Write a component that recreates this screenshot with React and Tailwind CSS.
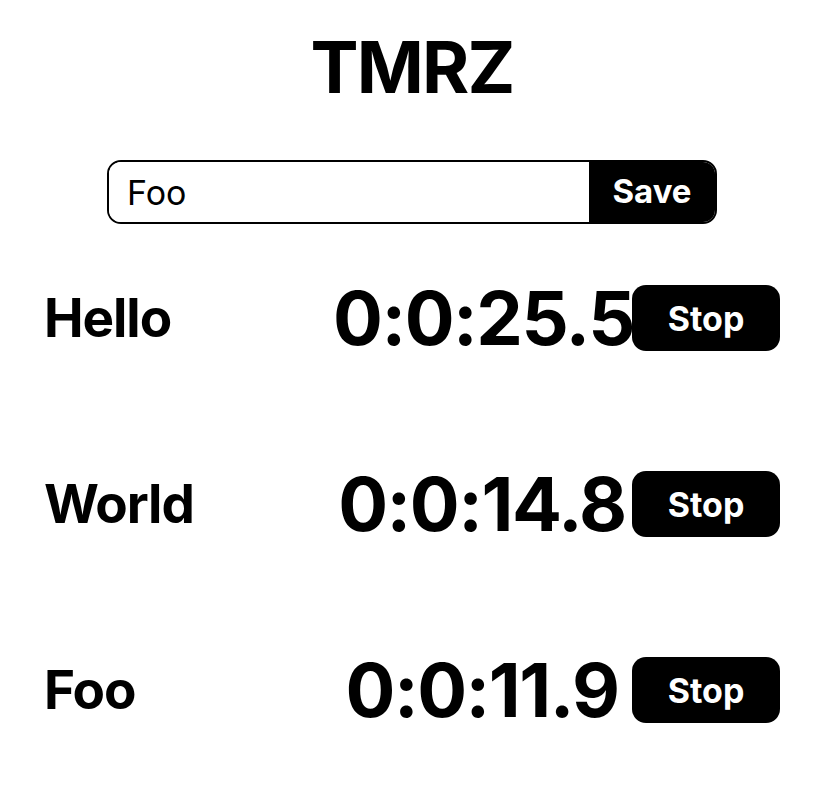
import { useState } from 'react'

const TIMERS = [
  { name: 'Hello', time: '0:0:25.5' },
  { name: 'World', time: '0:0:14.8' },
  { name: 'Foo',   time: '0:0:11.9' },
]

function TimerRow({ name, time }) {
  return (
    <div className="flex items-center h-[66px]">
      <p className="flex-1 text-[53px] font-bold leading-none text-black tracking-[-0.02em] -ml-[1px]">{name}</p>
      <p className="w-[298px] mr-[1px] text-center text-[74px] font-bold leading-none text-black tracking-[-0.02em]">{time}</p>
      <button className="w-[148px] h-[66px] bg-black text-white text-[34px] font-bold rounded-[14px]">Stop</button>
    </div>
  )
}

export default function App() {
  const [label, setLabel] = useState('Foo')

  return (
    <div className="flex flex-col items-center bg-white min-h-screen font-['Inter',sans-serif] text-black">
      {/* Title */}
      <h1 className="mt-[31px] text-[72px] font-bold leading-none tracking-[-0.025em]">TMRZ</h1>

      {/* New timer form */}
      <div className="mt-[57px] flex w-[610px] h-[64px] border-2 border-black rounded-[14px] overflow-hidden">
        <input
          value={label}
          onChange={e => setLabel(e.target.value)}
          className="flex-1 min-w-0 pl-[18px] text-[34px] outline-none bg-white"
        />
        <button className="w-[126px] bg-black text-white text-[33px] font-bold">Save</button>
      </div>

      {/* Timers */}
      <div className="w-full mt-[61px] pl-[45px] pr-[44px] flex flex-col gap-[120px]">
        {TIMERS.map(t => <TimerRow key={t.name} {...t}/>)}
      </div>
    </div>
  )
}
